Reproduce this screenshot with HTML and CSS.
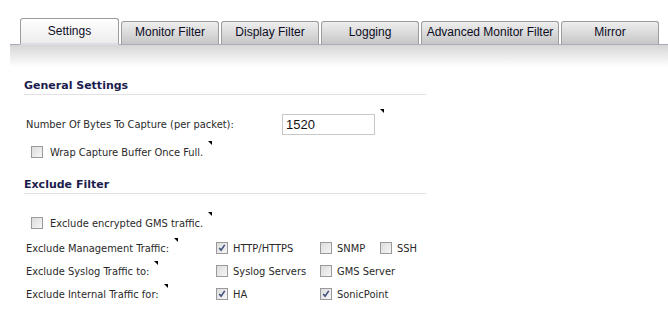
FILE: index.html
```html
<!DOCTYPE html>
<html lang="en">
<head>
    <meta charset="UTF-8">
    <title>Packet Monitor</title>
    <link rel="stylesheet" href="styles.css">
</head>
<body>
    <div class="tabbar">
        <div class="tab active">Settings</div>
        <div class="tab">Monitor Filter</div>
        <div class="tab">Display Filter</div>
        <div class="tab">Logging</div>
        <div class="tab wide">Advanced Monitor Filter</div>
        <div class="tab">Mirror</div>
    </div>
    <div class="band"></div>

    <div class="content">
        <!-- General Settings -->
        <h2 class="heading">General Settings</h2>
        <div class="field">
            <span class="label">Number Of Bytes To Capture (per packet):</span>
            <input class="text-input" type="text" value="1520">
            <span class="tip"></span>
        </div>
        <div class="check-row">
            <span class="cb"></span>
            <span>Wrap Capture Buffer Once Full.</span>
            <span class="tip"></span>
        </div>

        <!-- Exclude Filter -->
        <h2 class="heading second">Exclude Filter</h2>
        <div class="check-row gms">
            <span class="cb"></span>
            <span>Exclude encrypted GMS traffic.</span>
            <span class="tip"></span>
        </div>
        <div class="grid">
            <div class="label">Exclude Management Traffic:<span class="tip"></span></div>
            <div class="opt"><span class="cb checked"><svg viewBox="0 0 11 11"><path d="M2.5 5.5 L4.5 8 L8.5 2" /></svg></span>HTTP/HTTPS</div>
            <div class="opt"><span class="cb"></span>SNMP</div>
            <div class="opt"><span class="cb"></span>SSH</div>

            <div class="label">Exclude Syslog Traffic to:<span class="tip"></span></div>
            <div class="opt"><span class="cb"></span>Syslog Servers</div>
            <div class="opt span2"><span class="cb"></span>GMS Server</div>

            <div class="label">Exclude Internal Traffic for:<span class="tip"></span></div>
            <div class="opt"><span class="cb checked"><svg viewBox="0 0 11 11"><path d="M2.5 5.5 L4.5 8 L8.5 2" /></svg></span>HA</div>
            <div class="opt span2"><span class="cb checked"><svg viewBox="0 0 11 11"><path d="M2.5 5.5 L4.5 8 L8.5 2" /></svg></span>SonicPoint</div>
        </div>
    </div>
</body>
</html>
```

FILE: styles.css
```css
/* base */
* {
    box-sizing: border-box;
}

body {
    margin: 0;
    background-color: #FFFFFF;
    font-family: 'DejaVu Sans Condensed', 'DejaVu Sans', sans-serif;
    font-stretch: condensed;
    font-size: 11px;
    color: #2a2a2a;
}

/* tabs */
.tabbar {
    display: flex;
    align-items: flex-end;
    gap: 2px;
    height: 45px;
    margin-left: 10px;
    padding-left: 10px;
    border-bottom: 1px solid #a9a9c2;
}

.tab {
    width: 99px;
    height: 23px;
    border: 1px solid #9c9c9c;
    border-bottom: none;
    border-radius: 3px 3px 0 0;
    background: linear-gradient(#eeeeee, #c6c6c6);
    font-family: 'Liberation Sans', Arial, sans-serif;
    font-stretch: normal;
    font-size: 12px;
    line-height: 20px;
    text-align: center;
    color: #0c0c24;
}

.tab + .tab {
    width: 98px;
}

.tab.wide {
    width: 138px;
}

.tab.active {
    height: 27px;
    margin-bottom: -1px;
    line-height: 24px;
    background: linear-gradient(#ffffff, #ececec);
    border-bottom: 2px solid #dcdde9;
}

.band {
    height: 22px;
    margin-left: 10px;
    background: linear-gradient(#d6d6d6, #ffffff);
}

/* content */
.content {
    padding: 12px 0 0 24px;
}

.heading {
    width: 402px;
    margin: 0;
    padding-bottom: 1px;
    border-bottom: 1px solid #e2e2e6;
    font-family: 'DejaVu Sans', Verdana, sans-serif;
    font-stretch: normal;
    font-size: 11px;
    line-height: 14px;
    color: #1c1c4e;
}

.heading.second {
    margin-top: 19px;
}

.field {
    display: flex;
    align-items: center;
    height: 21px;
    margin-top: 19px;
    padding-left: 2px;
}

.field .label {
    width: 256px;
}

.text-input {
    width: 93px;
    height: 21px;
    padding: 0 3px;
    border: 1px solid #c8c8c8;
    font-family: 'Liberation Sans', Arial, sans-serif;
    font-size: 13px;
    color: #111111;
}

.check-row {
    display: flex;
    align-items: center;
    height: 14px;
    margin-top: 10px;
    padding-left: 7px;
}

.check-row.gms {
    margin-top: 22px;
}

.check-row .cb {
    margin-right: 7px;
}

/* small corner marker */
.tip {
    display: inline-block;
    align-self: flex-start;
    width: 0;
    height: 0;
    margin: -4px 0 0 5px;
    border-top: 4px solid #000000;
    border-left: 4px solid transparent;
}

.field .tip {
    margin-top: -5px;
}

/* checkboxes */
.cb {
    display: inline-block;
    flex: none;
    width: 12px;
    height: 12px;
    border: 1px solid #9a9a9a;
    background: linear-gradient(135deg, #dcdcdc, #f6f6f6);
}

.cb svg {
    display: block;
    width: 10px;
    height: 10px;
    fill: none;
    stroke: #3b4d78;
    stroke-width: 1.6;
}

.grid {
    display: grid;
    grid-template-columns: 190px 104px 60px 60px;
    grid-auto-rows: 23px;
    margin-top: 11px;
    padding-left: 2px;
}

.label, .opt {
    display: flex;
    align-items: center;
    height: 14px;
    white-space: nowrap;
}

.grid .label .tip {
    margin-top: -3px;
}

.opt .cb {
    margin-right: 5px;
}

.span2 {
    grid-column: span 2;
}
```
